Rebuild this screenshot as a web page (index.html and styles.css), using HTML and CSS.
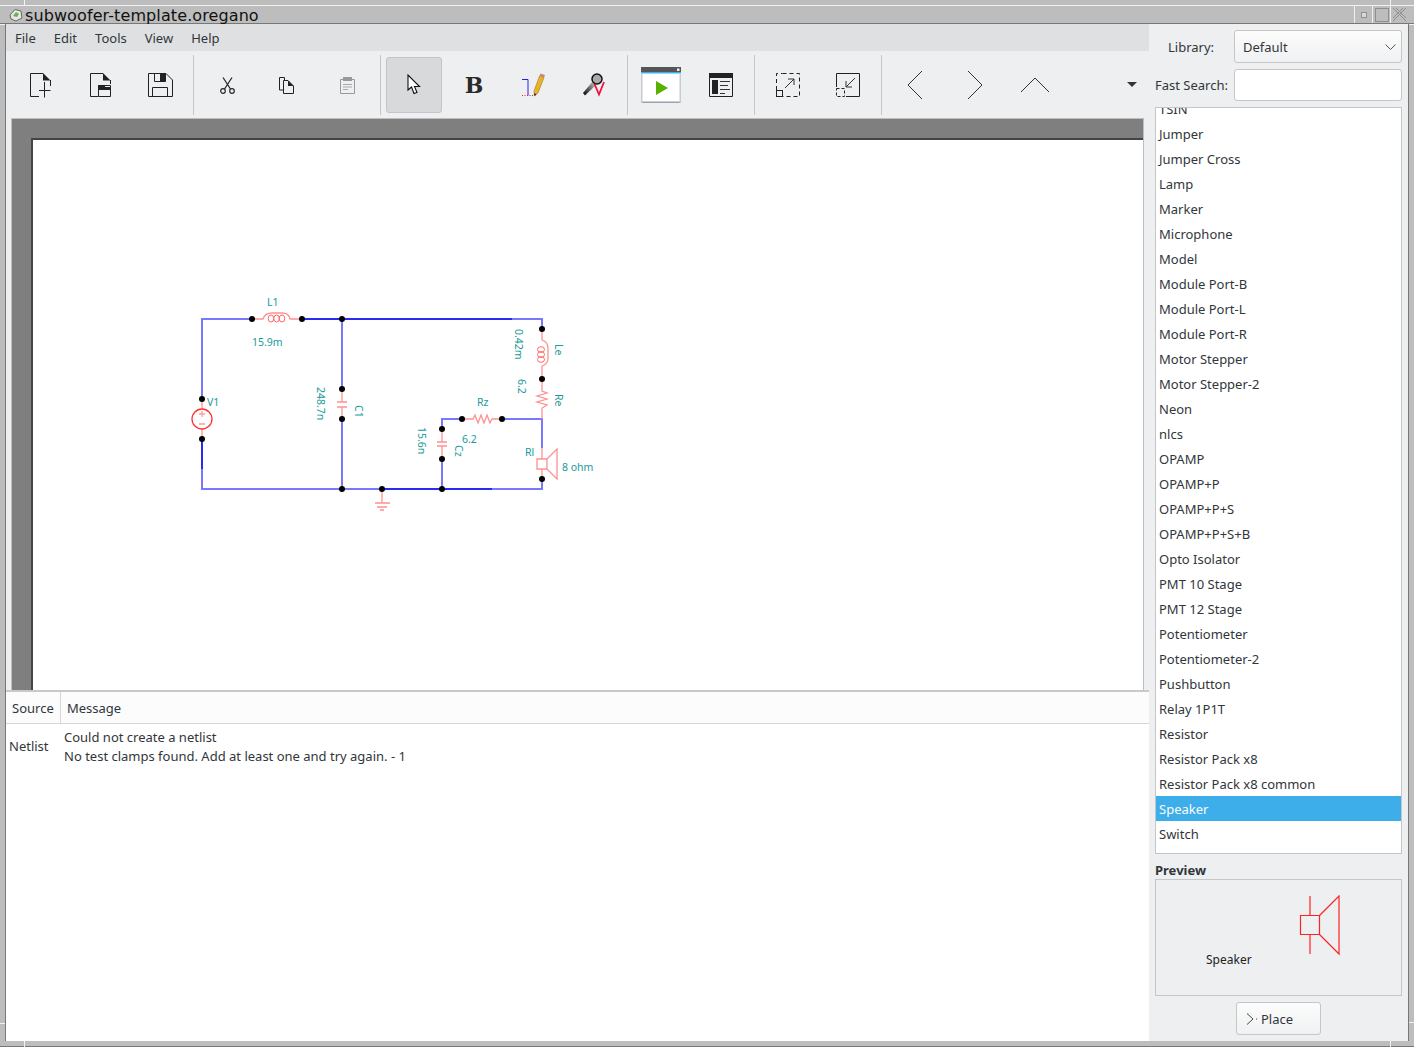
FILE: index.html
```html
<!DOCTYPE html>
<html lang="en">
<head>
    <meta charset="UTF-8">
    <title>subwoofer-template.oregano</title>
    <link rel="stylesheet" href="styles.css">
</head>
<body>
<div class="window">
    <!-- grab handle marks of the window frame -->
    <i class="notch notch-v top-left"></i>
    <i class="notch notch-v top-right"></i>
    <i class="notch notch-v bottom-left"></i>
    <i class="notch notch-v bottom-right"></i>
    <i class="notch notch-h left-upper"></i>
    <i class="notch notch-h right-upper"></i>
    <i class="notch notch-h left-lower"></i>
    <i class="notch notch-h right-lower"></i>

    <div class="titlebar">
        <svg class="app-icon" width="14" height="14" viewBox="0 0 14 14"><path d="M1 7 L6 1.500 L12 3 L13 10 L7 13 L2 11 Z" fill="#e6e8e0" stroke="#666"/><path d="M4 8 L7 4 L10 6 L8 9 Z" fill="#6fae5a"/></svg>
        <span class="title-text">subwoofer-template.oregano</span>
        <div class="win-buttons">
            <span class="win-btn"><i class="dot"></i></span>
            <span class="win-btn"><i class="square"></i></span>
            <span class="win-btn">
                <svg width="13" height="13" viewBox="0 0 13 13"><path d="M0 0 L13 13 M13 0 L0 13 M3 0 L13 10 M10 0 L0 10" stroke="#8f8f8f" fill="none"/></svg>
            </span>
        </div>
    </div>
    <div class="frame">
        <div class="main">
            <ul class="menubar">
                <li>File</li>
                <li>Edit</li>
                <li>Tools</li>
                <li>View</li>
                <li>Help</li>
            </ul>
            <div class="toolbar">
                <span class="tool tool-low"><svg width="21" height="25" viewBox="0 0 21 25"><path d="M13 .5 H.5 V23.500 H9 M20.500 7 V13" fill="none" stroke="#222"/><path d="M13 0 L20.500 7.500 H13 Z" fill="#222"/><path d="M14.500 9 V24.500 M9 17.500 H20.500" stroke="#222" fill="none"/></svg></span>
                <span class="tool tool-low"><svg width="21" height="25" viewBox="0 0 21 25"><path d="M13 .5 H.5 V23.500 H8 M20.500 7 V11" fill="none" stroke="#222"/><path d="M13 0 L20.500 7.500 H13 Z" fill="#222"/><path d="M8.500 12.500 H20.500 V23.500 H8.500 Z" fill="none" stroke="#222"/><path d="M8 12 H14 L15.500 14 H21 V17 H8 Z" fill="#222"/></svg></span>
                <span class="tool tool-low"><svg width="25" height="25" viewBox="0 0 25 25"><path d="M.5 .5 H18 L24.500 7 V23.500 H.5 Z" fill="none" stroke="#222"/><path d="M6.500 .5 H17.500 V8.500 H6.500 Z" fill="none" stroke="#222"/><path d="M12 .5 H17.500 V8.500 H12 Z" fill="#222"/><path d="M4.500 23.500 V14.500 H19.500 V23.500" fill="none" stroke="#222"/></svg></span>
                <span class="sep"></span>
                <span class="tool tool-low"><svg width="15" height="17" viewBox="0 0 15 17"><path d="M3 .5 L10.500 12 M12 .5 L4.500 12" stroke="#2a2a2a" stroke-width="1.300" fill="none"/><circle cx="3" cy="14" r="2.300" fill="none" stroke="#2a2a2a" stroke-width="1.200"/><circle cx="12" cy="14" r="2.300" fill="none" stroke="#2a2a2a" stroke-width="1.200"/></svg></span>
                <span class="tool tool-low copy-tool"><svg width="15" height="17" viewBox="0 0 15 17"><path d="M.5 .5 H5.500 V13 H.5 Z" fill="#eeeff1" stroke="#222"/><path d="M4.500 3.500 H9 L14.500 9 V16.500 H4.500 Z" fill="#eeeff1" stroke="#222"/><path d="M9 3.500 L14.500 9 H9 Z" fill="#222"/></svg></span>
                <span class="tool tool-low"><svg width="15" height="17" viewBox="0 0 15 17"><path d="M.5 2.500 H14.500 V16.500 H.5 Z" fill="none" stroke="#999"/><rect x="3" y="0" width="9" height="4" fill="#999"/><path d="M3 7.500 H12 M3 10 H12 M3 12.500 H8" stroke="#aaa"/></svg></span>
                <span class="sep"></span>
                <span class="tool active"><svg width="14" height="21" viewBox="0 0 14 21"><path d="M1 1 V16 L4.500 13 L7 19.500 L10 18.500 L7.500 12.500 L12.500 12.500 Z" fill="#fff" stroke="#111" stroke-width="1.100"/></svg></span>
                <span class="tool"><b class="bold-b">B</b></span>
                <span class="tool"><svg width="24" height="24" viewBox="0 0 24 24"><path d="M0 6.500 H6 V22.500" fill="none" stroke="#2222ee"/><path d="M0 22.500 H11" stroke="#ee2222" stroke-dasharray="1 1.500"/><path d="M12 18 L17.500 3 L22 4.500 L16 20 L12.500 23 Z" fill="#e8b32c" stroke="#a07c1e" stroke-width=".6"/><path d="M17.500 3 L18.500 .5 L23 2 L22 4.500 Z" fill="#c98a6a"/><path d="M12 20 L12.500 23 L14.500 21.500 Z" fill="#224"/></svg></span>
                <span class="tool"><svg width="24" height="24" viewBox="0 0 24 24"><defs><linearGradient id="mic-grad" x1="0" y1="1" x2="1" y2="0"><stop offset="0" stop-color="#000"/><stop offset="1" stop-color="#ddd"/></linearGradient></defs><path d="M1 20 L11 8 L15 11 L3 22.500 Z" fill="url(#mic-grad)"/><circle cx="15" cy="6" r="5" fill="#aaa" stroke="#111" stroke-width="1.500"/><path d="M12.500 11 L17 21.500 L22 9" fill="none" stroke="#f0103c" stroke-width="1.800"/></svg></span>
                <span class="sep"></span>
                <span class="tool"><svg width="40" height="36" viewBox="0 0 40 36"><rect width="40" height="36" fill="#fff"/><rect width="40" height="5" fill="#555"/><rect y="5" width="40" height="1.500" fill="#3daee9"/><rect x="36" y="1.500" width="2.500" height="2.500" fill="#eee"/><rect y="34.500" width="40" height="1.500" fill="#9aa3ad"/><rect y="6" width="1.500" height="30" fill="#c7ccd1"/><rect x="38.500" y="6" width="1.500" height="30" fill="#c7ccd1"/><path d="M15 14 L27 21 L15 28 Z" fill="#58b000"/></svg></span>
                <span class="tool"><svg width="24" height="24" viewBox="0 0 24 24"><path d="M.5 .5 H23.500 V23.500 H.5 Z" fill="none" stroke="#222"/><rect x="0" y="0" width="24" height="5" fill="#222"/><rect x="3" y="7" width="6" height="14" fill="#222"/><path d="M11 8.500 H21 M11 12.500 H19 M11 16.500 H21 M11 20.500 H16" stroke="#333"/></svg></span>
                <span class="sep"></span>
                <span class="tool"><svg width="24" height="24" viewBox="0 0 24 24"><path d="M6.500 .5 H23.500 V23.500 H6.500 M.5 17 V.5 H6.500" fill="none" stroke="#222" stroke-dasharray="4 3"/><rect x=".5" y="17.500" width="6" height="6" fill="none" stroke="#222"/><path d="M9 15 L18 6 M12 6 H18 V12" fill="none" stroke="#333"/></svg></span>
                <span class="tool"><svg width="24" height="24" viewBox="0 0 24 24"><path d="M.5 14 V.5 H23.500 V23.500 H10" fill="none" stroke="#222"/><rect x=".5" y="15.500" width="8" height="8" fill="none" stroke="#222" stroke-dasharray="3 2"/><path d="M19 5 L10 14 M10 8 V14 H16" fill="none" stroke="#333"/></svg></span>
                <span class="sep"></span>
                <span class="tool"><svg width="18" height="30" viewBox="0 0 18 30"><path d="M16 1 L2 15 L16 29" fill="none" stroke="#333"/></svg></span>
                <span class="tool"><svg width="18" height="30" viewBox="0 0 18 30"><path d="M2 1 L16 15 L2 29" fill="none" stroke="#333"/></svg></span>
                <span class="tool"><svg width="30" height="18" viewBox="0 0 30 18"><path d="M1 16 L15 2 L29 16" fill="none" stroke="#333"/></svg></span>
                <span class="overflow-arrow"></span>
            </div>
            <div class="canvas-wrap">
                <div class="sheet">
                    <svg class="schematic" width="620" height="420" viewBox="0 0 620 420">
                        <g class="wire">
                            <path d="M170 111 V31 H220"/>
                            <path d="M270 31 H510 V41"/>
                            <path d="M310 31 V101"/>
                            <path d="M310 131 V201"/>
                            <path d="M170 151 V201 H510 V190"/>
                            <path d="M410 201 V171"/>
                            <path d="M410 141 V131 H430"/>
                            <path d="M470 131 H510 V160"/>
                        </g>
                        <g class="wire-dark">
                            <path d="M170 151 V181"/>
                            <path d="M270 31 H480"/>
                            <path d="M350 201 H460"/>
                        </g>
                        <g class="part">
                            <path d="M220 31 H231 Q233 25 240 25 H250 Q257 25 258 31 H270"/>
                            <path d="M310 101 V114 M305 114 H315 M305 119 H315 M310 119 V131"/>
                            <path d="M170 111 V121 M170 141 V151"/>
                            <path d="M510 41 V52 Q516 54 516 60 V70 Q516 76 510 78 V91"/>
                            <path d="M510 91 V103 L515 105 L505 108 L515 111 L505 114 L515 117 L510 120 V131"/>
                            <path d="M430 131 H441 L443 127 L446 135 L449 127 L452 135 L455 127 L458 135 L460 131 H470"/>
                            <path d="M410 141 V154 M405 154 H415 M405 158 H415 M410 158 V171"/>
                            <path d="M350 201 V215 M343 215 H358 M345 219 H355 M348 222 H352"/>
                            <path d="M505 171 H515 V181 H505 Z M515 171 L525 161 V191 L515 181 M510 160 V171 M510 181 V190"/>
                        </g>
                        <g class="coil">
                            <ellipse cx="239" cy="30.500" rx="2.800" ry="3.500"/><ellipse cx="244.500" cy="30.500" rx="2.800" ry="3.500"/><ellipse cx="250" cy="30.500" rx="2.800" ry="3.500"/>
                            <ellipse cx="509" cy="61.500" rx="3.500" ry="2.800"/><ellipse cx="509" cy="66.500" rx="3.500" ry="2.800"/><ellipse cx="509" cy="71.500" rx="3.500" ry="2.800"/>
                        </g>
                        <circle class="source" cx="170" cy="131" r="10"/>
                        <path class="source-sign" d="M167 126 H173 M170 123 V129 M167 136 H173"/>
                        <g class="pin">
                            <circle cx="220" cy="31" r="3"/><circle cx="270" cy="31" r="3"/><circle cx="310" cy="31" r="3"/>
                            <circle cx="310" cy="101" r="3"/><circle cx="310" cy="131" r="3"/><circle cx="310" cy="201" r="3"/>
                            <circle cx="170" cy="111" r="3"/><circle cx="170" cy="151" r="3"/>
                            <circle cx="350" cy="201" r="3"/><circle cx="410" cy="201" r="3"/><circle cx="410" cy="141" r="3"/>
                            <circle cx="410" cy="171" r="3"/><circle cx="430" cy="131" r="3"/><circle cx="470" cy="131" r="3"/>
                            <circle cx="510" cy="41" r="3"/><circle cx="510" cy="91" r="3"/><circle cx="510" cy="191" r="3"/>
                        </g>
                        <g class="label">
                            <text x="235" y="18">L1</text>
                            <text x="220" y="58">15.9m</text>
                            <text x="175" y="118">V1</text>
                            <text x="445" y="118">Rz</text>
                            <text x="430" y="155">6.2</text>
                            <text x="493" y="168">Rl</text>
                            <text x="530" y="183">8 ohm</text>
                            <text transform="translate(285 99) rotate(90)">248.7n</text>
                            <text transform="translate(323 117) rotate(90)">C1</text>
                            <text transform="translate(386 139) rotate(90)">15.6n</text>
                            <text transform="translate(423 157) rotate(90)">Cz</text>
                            <text transform="translate(483 41) rotate(90)">0.42m</text>
                            <text transform="translate(486 91) rotate(90)">6.2</text>
                            <text transform="translate(523 56) rotate(90)">Le</text>
                            <text transform="translate(523 106) rotate(90)">Re</text>
                        </g>
                    </svg>
                </div>
            </div>
            <div class="log">
                <div class="log-head">
                    <span class="col-source">Source</span>
                    <span class="col-message">Message</span>
                </div>
                <div class="log-row">
                    <span class="log-source">Netlist</span>
                    <div class="log-text">
                        <div>Could not create a netlist</div>
                        <div>No test clamps found. Add at least one and try again. - 1</div>
                    </div>
                </div>
            </div>
        </div>
        <aside class="sidebar">
            <div class="field-row library-row">
                <label class="lib-label">Library:</label>
                <div class="combo">Default
                    <svg width="11" height="6" viewBox="0 0 11 6"><path d="M.5 .5 L5.500 5.500 L10.500 .5" fill="none" stroke="#555"/></svg>
                </div>
            </div>
            <div class="field-row search-row">
                <label>Fast Search:</label>
                <div class="search-box"></div>
            </div>
            <div class="part-list">
                <ul>
                    <li>TSIN</li>
                    <li>Jumper</li>
                    <li>Jumper Cross</li>
                    <li>Lamp</li>
                    <li>Marker</li>
                    <li>Microphone</li>
                    <li>Model</li>
                    <li>Module Port-B</li>
                    <li>Module Port-L</li>
                    <li>Module Port-R</li>
                    <li>Motor Stepper</li>
                    <li>Motor Stepper-2</li>
                    <li>Neon</li>
                    <li>nlcs</li>
                    <li>OPAMP</li>
                    <li>OPAMP+P</li>
                    <li>OPAMP+P+S</li>
                    <li>OPAMP+P+S+B</li>
                    <li>Opto Isolator</li>
                    <li>PMT 10 Stage</li>
                    <li>PMT 12 Stage</li>
                    <li>Potentiometer</li>
                    <li>Potentiometer-2</li>
                    <li>Pushbutton</li>
                    <li>Relay 1P1T</li>
                    <li>Resistor</li>
                    <li>Resistor Pack x8</li>
                    <li>Resistor Pack x8 common</li>
                    <li class="selected">Speaker</li>
                    <li>Switch</li>
                </ul>
            </div>
            <div class="preview-title">Preview</div>
            <div class="preview">
                <span class="preview-name">Speaker</span>
                <svg class="preview-symbol" width="42" height="62" viewBox="0 0 42 62"><path d="M1.500 20.500 H20.500 V39.500 H1.500 Z M11 1 V20.500 M11 39.500 V59 M20.500 20.500 L40 1 V59 L20.500 39.500" fill="none" stroke="#f22" stroke-width="1.200"/></svg>
            </div>
            <div class="place-row">
                <button class="place-btn">
                    <svg width="12" height="12" viewBox="0 0 12 12"><path d="M1 .5 L7 6 L1 11.500 M10 6 H11" fill="none" stroke="#444"/></svg>
                    Place
                </button>
            </div>
        </aside>
    </div>
</div>
</body>
</html>
```

FILE: styles.css
```css
html, body {
    margin: 0;
    padding: 0;
}

body {
    width: 1414px;
    height: 1047px;
    overflow: hidden;
    font-family: "Noto Sans", sans-serif;
    font-size: 13px;
    color: #31363b;
    background: #bdbdbd;
}

.window {
    position: relative;
    display: flex;
    flex-direction: column;
    height: 1047px;
    box-sizing: border-box;
    border-bottom: 1px solid #777;
}

/* Frame handle marks */
.notch {
    position: absolute;
    background: #f4f4f4;
}

.notch-v {
    width: 1px;
    height: 5px;
}

.notch-h {
    width: 5px;
    height: 1px;
}

.top-left { left: 24px; top: 0; }
.top-right { left: 1390px; top: 0; }
.bottom-left { left: 24px; top: 1041px; height: 6px; }
.bottom-right { left: 1390px; top: 1041px; height: 6px; }
.left-upper { left: 0; top: 24px; }
.right-upper { left: 1409px; top: 24px; }
.left-lower { left: 0; top: 1023px; }
.right-lower { left: 1409px; top: 1022px; }

/* Title bar */
.titlebar {
    display: flex;
    align-items: center;
    height: 19px;
    margin-top: 5px;
    padding-left: 9px;
    box-sizing: border-box;
    background: #bdbdbd;
    border-top: 1px solid #f2f2f2;
    border-bottom: 1px solid #777;
}

.app-icon {
    margin-right: 2px;
}

.title-text {
    margin-top: 2px;
    font-family: "DejaVu Sans", sans-serif;
    font-size: 16px;
    letter-spacing: .1px;
    color: #111;
}

.win-buttons {
    display: flex;
    margin-left: auto;
    margin-right: 6px;
}

.win-btn {
    display: flex;
    align-items: center;
    justify-content: center;
    width: 18px;
    height: 17px;
    box-sizing: border-box;
    border-left: 1px solid #efefef;
}

.win-btn .dot {
    width: 4px;
    height: 4px;
    border: 1px solid #8f8f8f;
    background: #d8d8d8;
}

.win-btn .square {
    width: 12px;
    height: 12px;
    border: 1px solid #8f8f8f;
}

.frame {
    display: flex;
    flex: 1;
    min-height: 0;
    margin: 0 5px 5px;
    background: #eeeff1;
    border-left: 1px solid #777;
    border-right: 1px solid #777;
}

.main {
    display: flex;
    flex-direction: column;
    width: 1143px;
}

/* Menu and toolbar */
.menubar {
    display: flex;
    gap: 18px;
    height: 27px;
    margin: 0;
    padding: 0 0 0 9px;
    list-style: none;
    line-height: 29px;
    background: #dfe0e2;
}

.toolbar {
    display: flex;
    align-items: center;
    height: 67px;
    padding-left: 6px;
    background: #eeeff1;
    box-sizing: border-box;
}

.tool {
    display: flex;
    align-items: center;
    justify-content: center;
    width: 56px;
    height: 56px;
    margin-right: 4px;
    box-sizing: border-box;
}

.tool-low {
    padding-top: 2px;
}

.copy-tool {
    padding-right: 2px;
}

.tool.active {
    background: #d8d9db;
    border: 1px solid #c3c5c8;
    border-radius: 3px;
}

.bold-b {
    font-family: "DejaVu Serif", serif;
    font-size: 22px;
    font-weight: bold;
    color: #2a2a2a;
}

.sep {
    width: 1px;
    height: 60px;
    margin: 0 5px 0 1px;
    background: #c4c6c8;
}

.overflow-arrow {
    width: 0;
    height: 0;
    margin-left: 60px;
    border-left: 5px solid transparent;
    border-right: 5px solid transparent;
    border-top: 5px solid #31363b;
}

/* Schematic */
.canvas-wrap {
    height: 572px;
    margin: 0 5px;
    padding: 19px 0 0 19px;
    box-sizing: border-box;
    background: #7f7f7f;
    border-top: 1px solid #bdbec0;
    border-left: 1px solid #bdbec0;
    border-right: 1px solid #bdbec0;
    overflow: hidden;
}

.sheet {
    position: relative;
    height: 100%;
    background: #fff;
    border-top: 2px solid #444;
    border-left: 2px solid #444;
}

.schematic {
    position: absolute;
    left: -1px;
    top: 148px;
}

.wire path {
    fill: none;
    stroke: #7878ff;
    stroke-width: 2;
}

.wire-dark path {
    fill: none;
    stroke: #2a2af0;
    stroke-width: 2;
}

.part path {
    fill: none;
    stroke: #ff9090;
    stroke-width: 1.300;
}

.coil ellipse {
    fill: none;
    stroke: #f66;
    stroke-width: 1;
}

.source {
    fill: none;
    stroke: #f33;
    stroke-width: 1.300;
}

.source-sign {
    fill: none;
    stroke: #ff9c9c;
    stroke-width: 1.300;
}

.pin circle {
    fill: #000;
}

.label text {
    font-family: "Noto Sans", sans-serif;
    font-size: 10.500px;
    fill: #1a9a9a;
}

/* Log panel */
.log {
    flex: 1;
    background: #fff;
    border-top: 2px solid #c8c9cb;
}

.log-head {
    display: flex;
    height: 32px;
    box-sizing: border-box;
    line-height: 33px;
    background: #fcfcfc;
    border-bottom: 1px solid #d5d6d8;
}

.col-source {
    width: 48px;
    padding-left: 6px;
    border-right: 1px solid #d5d6d8;
}

.col-message {
    padding-left: 6px;
}

.log-row {
    display: flex;
    align-items: center;
    padding: 4px 0 0 3px;
    line-height: 19px;
}

.log-source {
    width: 55px;
    padding-bottom: 1px;
}

/* Right side */
.sidebar {
    flex: 1;
    padding: 6px 6px 0;
    box-sizing: border-box;
}

.field-row {
    display: flex;
    align-items: center;
    justify-content: space-between;
    height: 32px;
}

.library-row {
    height: 33px;
}

.lib-label {
    padding-left: 13px;
}

.combo {
    display: flex;
    align-items: center;
    justify-content: space-between;
    width: 168px;
    height: 33px;
    padding: 0 5px 0 8px;
    box-sizing: border-box;
    background: linear-gradient(#fcfcfc, #f0f1f2);
    border: 1px solid #c4c6c8;
    border-radius: 3px;
}

.search-row {
    margin-top: 6px;
}

.search-box {
    width: 168px;
    height: 32px;
    box-sizing: border-box;
    background: #fff;
    border: 1px solid #c4c6c8;
    border-radius: 3px;
}

.part-list {
    height: 747px;
    margin-top: 6px;
    box-sizing: border-box;
    background: #fff;
    border: 1px solid #c4c6c8;
    overflow: hidden;
}

.part-list ul {
    margin: -12px 0 0;
    padding: 0;
    list-style: none;
}

.part-list li {
    height: 25px;
    padding-left: 3px;
    line-height: 27px;
}

.part-list li.selected {
    color: #fcfcfc;
    background: #3daee9;
}

.preview-title {
    margin-top: 6px;
    height: 19px;
    line-height: 20px;
    font-weight: bold;
}

.preview {
    position: relative;
    height: 117px;
    box-sizing: border-box;
    border: 1px solid #c4c6c8;
}

.preview-name {
    position: absolute;
    left: 50px;
    top: 71px;
    font-size: 12px;
    color: #222;
}

.preview-symbol {
    position: absolute;
    left: 143px;
    top: 15px;
}

.place-row {
    display: flex;
    justify-content: center;
    margin-top: 6px;
}

.place-btn {
    display: flex;
    align-items: center;
    gap: 3px;
    width: 85px;
    height: 33px;
    padding-left: 9px;
    box-sizing: border-box;
    font-family: "Noto Sans", sans-serif;
    font-size: 13px;
    color: #31363b;
    background: linear-gradient(#fcfcfc, #f0f1f2);
    border: 1px solid #c4c6c8;
    border-radius: 3px;
}
```
